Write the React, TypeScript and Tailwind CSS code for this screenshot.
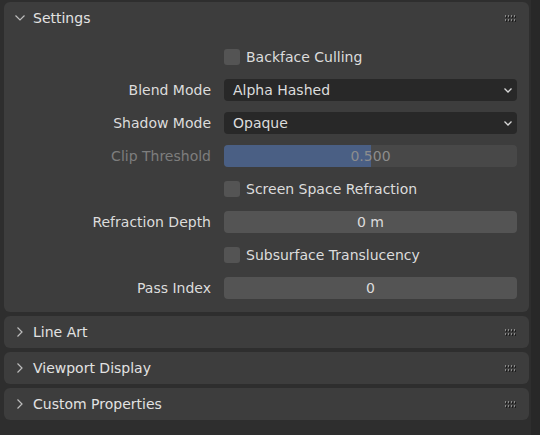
import React from "react";

const Chevron = ({ open }: { open: boolean }) => (
  <svg width="12" height="12" viewBox="0 0 12 12" className="shrink-0">
    {open ? (
      <path d="M1.5 3.5 L6 8 L10.5 3.5" fill="none" stroke="#bdbdbd" strokeWidth="1.2" />
    ) : (
      <path d="M3.5 1.5 L8 6 L3.5 10.5" fill="none" stroke="#bdbdbd" strokeWidth="1.2" />
    )}
  </svg>
);

const Grip = () => (
  <svg width="13" height="7" viewBox="0 0 13 7" className="shrink-0">
    {[0, 1].map((r) =>
      [0, 1, 2, 3].map((c) => (
        <g key={`${r}-${c}`}>
          <rect x={c * 3 + 1} y={r * 4 + 1} width="1" height="2" fill="#1c1c1c" />
          <rect x={c * 3} y={r * 4} width="1" height="2" fill="#8a8a8a" />
        </g>
      ))
    )}
  </svg>
);

const SmallDown = () => (
  <svg width="10" height="10" viewBox="0 0 10 10">
    <path d="M1.5 3.5 L5 7 L8.5 3.5" fill="none" stroke="#d8d8d8" strokeWidth="1.3" />
  </svg>
);

const Label = ({ text, dim }: { text?: string; dim?: boolean }) => (
  <div className={`w-[220px] shrink-0 pr-[13px] text-right ${dim ? "text-[#7d7d7d]" : "text-[#dcdcdc]"}`}>
    {text}
  </div>
);

const CheckRow = ({ text }: { text: string }) => (
  <div className="flex items-center h-[22px]">
    <Label />
    <div className="flex items-center gap-[6px]">
      <div className="w-[16px] h-[16px] rounded-[3px] bg-[#545454]" />
      <span className="text-[#dcdcdc]">{text}</span>
    </div>
  </div>
);

const SelectRow = ({ label, value }: { label: string; value: string }) => (
  <div className="flex items-center h-[22px]">
    <Label text={label} />
    <div className="flex-1 h-[22px] rounded-[4px] bg-[#282828] flex items-center justify-between pl-[9px] pr-[4px] text-[#dcdcdc]">
      <span>{value}</span>
      <SmallDown />
    </div>
  </div>
);

const NumberRow = ({ label, value }: { label: string; value: string }) => (
  <div className="flex items-center h-[22px]">
    <Label text={label} />
    <div className="flex-1 h-[22px] rounded-[4px] bg-[#545454] flex items-center justify-center text-[#dcdcdc]">
      {value}
    </div>
  </div>
);

const SliderRow = ({ label, value, frac }: { label: string; value: string; frac: number }) => (
  <div className="flex items-center h-[22px]">
    <Label text={label} dim />
    <div className="relative flex-1 h-[22px] rounded-[4px] bg-[#484848] overflow-hidden flex items-center justify-center">
      <div className="absolute left-0 top-0 bottom-0 bg-[#4a5f84]" style={{ width: `${frac * 100}%` }} />
      <span className="relative text-[#8d8d8d]">{value}</span>
    </div>
  </div>
);

const Header = ({ title, open }: { title: string; open: boolean }) => (
  <div className="flex items-center h-[32px] pl-[10px] pr-[11px]">
    <Chevron open={open} />
    <span className="ml-[7px] text-[#e2e2e2] flex-1">{title}</span>
    <Grip />
  </div>
);

export default function App() {
  return (
    <div
      className="w-[540px] h-[435px] bg-[#2e2e2e] flex text-[14px] overflow-hidden"
      style={{ fontFamily: '"DejaVu Sans", "Noto Sans", sans-serif' }}
    >
      <div className="flex-1 flex flex-col gap-[4px] pt-[2px] pl-[4px] pr-[2px]">
        <div className="bg-[#3d3d3d] rounded-[6px] pb-[13px]">
          <Header title="Settings" open />
          <div className="flex flex-col gap-[11px] pt-[12px] pr-[12px]">
            <CheckRow text="Backface Culling" />
            <SelectRow label="Blend Mode" value="Alpha Hashed" />
            <SelectRow label="Shadow Mode" value="Opaque" />
            <SliderRow label="Clip Threshold" value="0.500" frac={0.5} />
            <CheckRow text="Screen Space Refraction" />
            <NumberRow label="Refraction Depth" value="0 m" />
            <CheckRow text="Subsurface Translucency" />
            <NumberRow label="Pass Index" value="0" />
          </div>
        </div>
        <div className="bg-[#3d3d3d] rounded-[6px]">
          <Header title="Line Art" open={false} />
        </div>
        <div className="bg-[#3d3d3d] rounded-[6px]">
          <Header title="Viewport Display" open={false} />
        </div>
        <div className="bg-[#3d3d3d] rounded-[6px]">
          <Header title="Custom Properties" open={false} />
        </div>
      </div>
      <div className="w-[9px] bg-[#282828]" />
    </div>
  );
}
